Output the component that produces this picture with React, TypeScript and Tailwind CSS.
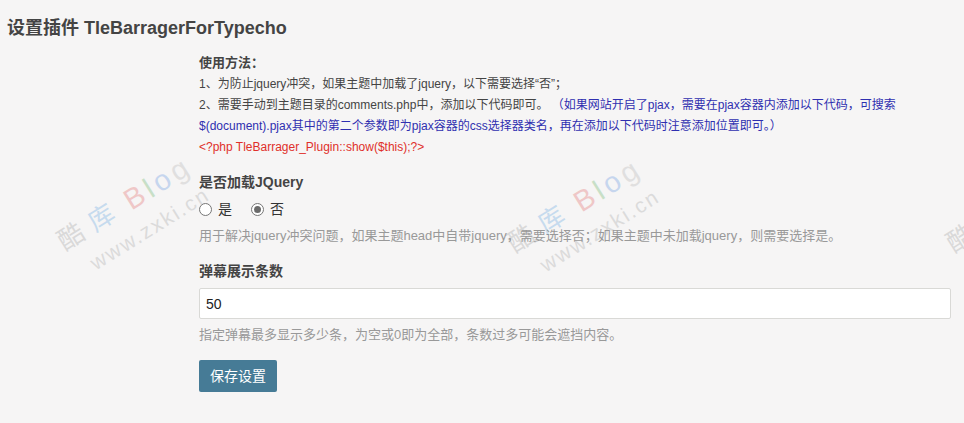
import React from "react";

const font = { fontFamily: '"Liberation Sans", Arial, "Noto Sans CJK SC", sans-serif' };

function Watermark({ left, top }: { left: number; top: number }) {
  return (
    <div
      className="pointer-events-none absolute select-none"
      style={{ left, top, transform: "rotate(-32deg)", transformOrigin: "left top" }}
    >
      <div className="flex items-center whitespace-nowrap text-[26px] leading-[30px]">
        <span className="text-[#9a9a9a] opacity-30">酷</span>
        <span className="ml-[10px] text-[#5aa0e0] opacity-30">库</span>
        <span className="ml-[16px] text-[29px] tracking-[4px]">
          <span className="text-[#e06060] opacity-30">B</span>
          <span className="text-[#60b060] opacity-30">l</span>
          <span className="text-[#5a90e0] opacity-30">o</span>
          <span className="text-[#b0b0b0] opacity-30">g</span>
        </span>
      </div>
      <div className="ml-[16px] mt-[8px] whitespace-nowrap text-[21px] leading-[24px] tracking-[2px] text-[#a0a0a0] opacity-30">
        www.zxki.cn
      </div>
    </div>
  );
}

function Radio({ checked, label }: { checked?: boolean; label: string }) {
  return (
    <label className="flex items-center gap-[6px]">
      <span className="flex h-[13px] w-[13px] items-center justify-center rounded-full border border-[#767676] bg-white">
        {checked && <span className="h-[7px] w-[7px] rounded-full bg-[#6b6b6b]" />}
      </span>
      <span className="text-[14px] text-[#333]">{label}</span>
    </label>
  );
}

export default function App() {
  return (
    <div className="relative h-[423px] w-[964px] overflow-hidden bg-[#f6f5f5]" style={font}>
      <h2 className="pl-[7px] pt-[16px] text-[18px] font-bold leading-[24px] text-[#444]">
        设置插件 TleBarragerForTypecho
      </h2>

      <div className="ml-[199px] mr-[13px] mt-[12px]">
        <div className="text-[13px] font-bold leading-[22px] text-[#444]">使用方法：</div>
        <div className="text-[12px] leading-[21px] text-[#444]">
          <div>1、为防止jquery冲突，如果主题中加载了jquery，以下需要选择“否”；</div>
          <div>
            2、需要手动到主题目录的comments.php中，添加以下代码即可。&nbsp;
            <span className="text-[#2f2fb0]">
              （如果网站开启了pjax，需要在pjax容器内添加以下代码，可搜索
              <br />
              $(document).pjax其中的第二个参数即为pjax容器的css选择器类名，再在添加以下代码时注意添加位置即可。）
            </span>
          </div>
          <div className="text-[#e0302a]">&lt;?php TleBarrager_Plugin::show($this);?&gt;</div>
        </div>

        <div className="mt-[14px] text-[14px] font-bold leading-[20px] text-[#444]">是否加载JQuery</div>
        <div className="mt-[7px] flex h-[20px] items-center gap-[19px]">
          <Radio label="是" />
          <Radio label="否" checked />
        </div>
        <div className="mt-[7px] text-[13px] leading-[20px] text-[#999]">
          用于解决jquery冲突问题，如果主题head中自带jquery，需要选择否；如果主题中未加载jquery，则需要选择是。
        </div>

        <div className="mt-[15px] text-[14px] font-bold leading-[20px] text-[#444]">弹幕展示条数</div>
        <input
          type="text"
          defaultValue="50"
          className="mt-[7px] block h-[31px] w-full rounded-[2px] border border-[#d9d9d6] bg-white px-[6px] text-[14px] text-[#222] outline-none"
          style={font}
        />
        <div className="mt-[6px] text-[13px] leading-[20px] text-[#999]">
          指定弹幕最多显示多少条，为空或0即为全部，条数过多可能会遮挡内容。
        </div>

        <button
          type="button"
          className="mt-[15px] h-[32px] rounded-[2px] bg-[#467b96] px-[11px] text-[14px] text-white"
          style={font}
        >
          保存设置
        </button>
      </div>

      <Watermark left={52} top={231} />
      <Watermark left={502} top={233} />
      <Watermark left={941} top={233} />
    </div>
  );
}
